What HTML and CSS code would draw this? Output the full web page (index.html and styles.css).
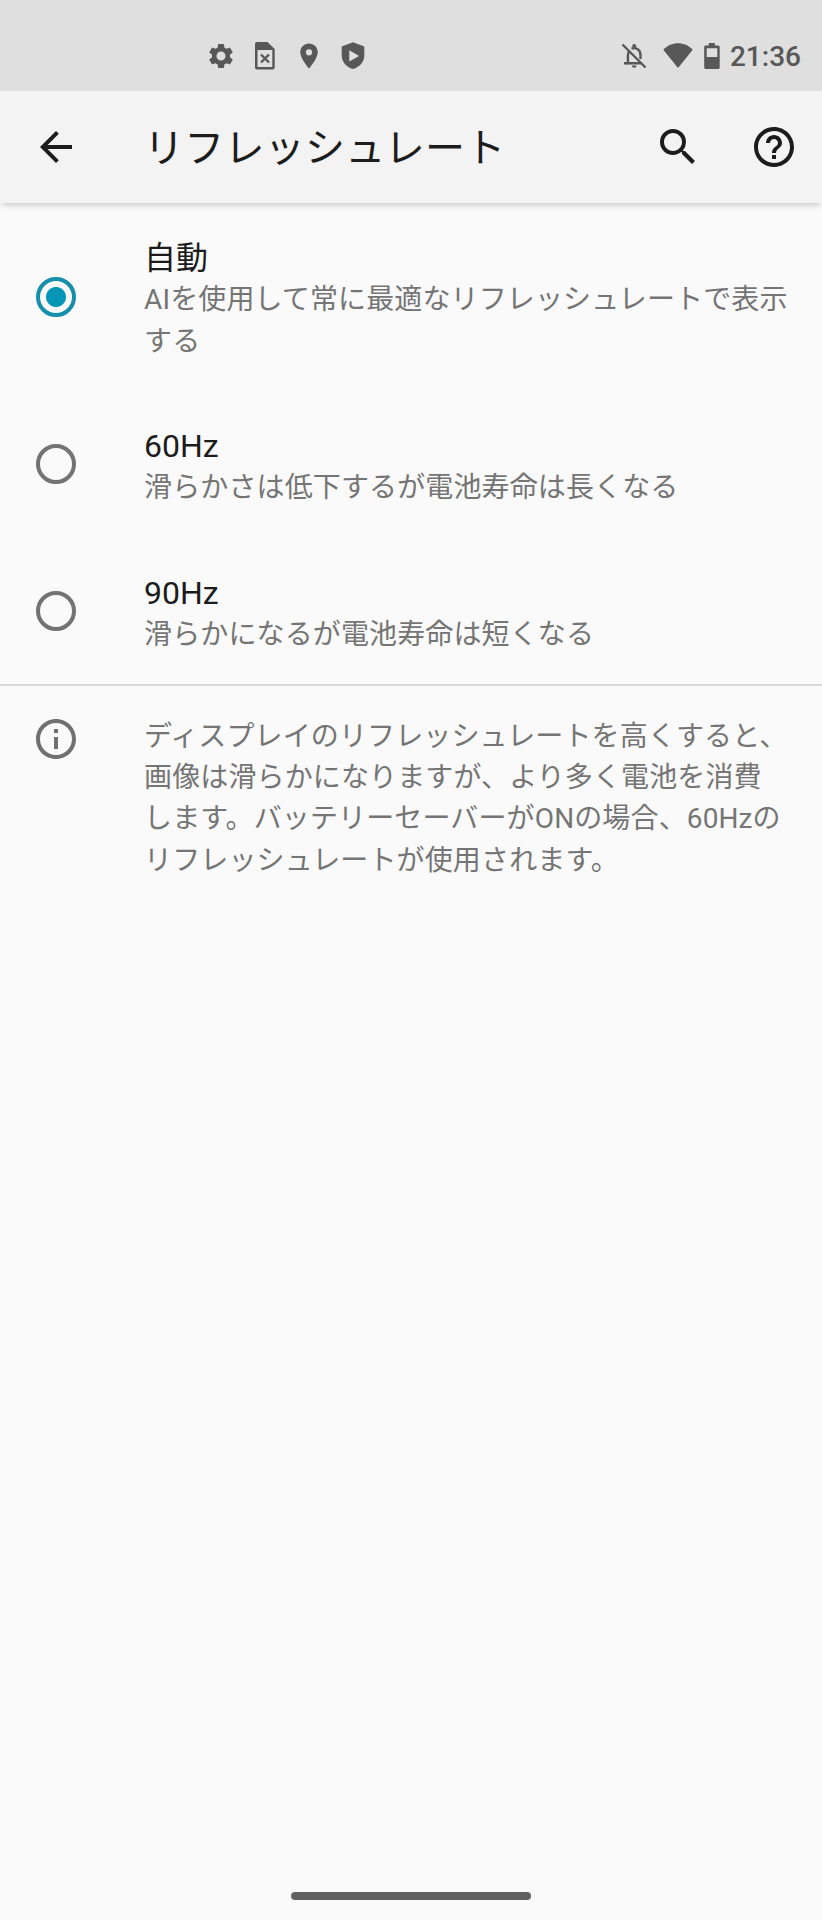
FILE: index.html
```html
<!DOCTYPE html>
<html lang="ja">
<head>
  <meta charset="UTF-8">
  <title>リフレッシュレート</title>
  <link rel="stylesheet" href="styles.css">
</head>
<body>
  <div class="status-bar">
    <div class="notifications">
      <svg viewBox="-0.8 -0.8 25.6 25.6"><path d="M19.14 12.94c.04-.3.06-.61.06-.94 0-.32-.02-.64-.07-.94l2.03-1.58c.18-.14.23-.41.12-.61l-1.92-3.32c-.12-.22-.37-.29-.59-.22l-2.39.96c-.5-.38-1.03-.7-1.62-.94L14.4 2.81c-.04-.24-.24-.41-.48-.41h-3.84c-.24 0-.43.17-.47.41l-.36 2.54c-.59.24-1.13.57-1.62.94l-2.39-.96c-.22-.08-.47 0-.59.22L2.74 8.87c-.12.21-.08.47.12.61l2.03 1.58c-.05.3-.09.63-.09.94s.02.64.07.94l-2.03 1.58c-.18.14-.23.41-.12.61l1.92 3.32c.12.22.37.29.59.22l2.39-.96c.5.38 1.03.7 1.62.94l.36 2.54c.05.24.24.41.48.41h3.84c.24 0 .44-.17.47-.41l.36-2.54c.59-.24 1.13-.56 1.62-.94l2.39.96c.22.08.47 0 .59-.22l1.92-3.32c.12-.22.07-.47-.12-.61l-2.01-1.58zM12 15.6c-1.98 0-3.6-1.62-3.6-3.6s1.62-3.6 3.6-3.6 3.6 1.62 3.6 3.6-1.62 3.6-3.6 3.6z"/></svg>
      <svg viewBox="0 0 32 32">
        <path fill-rule="evenodd" d="M8 2h10.500l7.200 7v18.500a2 2 0 0 1-2 2H8a2 2 0 0 1-2-2V4a2 2 0 0 1 2-2zM8.500 10v17h14.800V10z"/>
        <path class="line" d="M12 14.500l8 8M20 14.500l-8 8"/>
      </svg>
      <svg viewBox="-0.8 -0.8 25.6 25.6"><path d="M12 2C8.13 2 5 5.13 5 9c0 5.250 7 13 7 13s7-7.750 7-13c0-3.870-3.130-7-7-7zm0 9.500a2.500 2.500 0 0 1 0-5 2.500 2.500 0 0 1 0 5z"/></svg>
      <svg viewBox="0 0 32 32"><path fill-rule="evenodd" d="M16 2.200L27.300 6.500v9.300c0 6-4.700 11.300-11.300 13.300-6.600-2-11.300-7.300-11.300-13.300V6.500zM12.300 10.300v11.200l9.700-5.600z"/></svg>
    </div>
    <div class="system">
      <svg class="bell" viewBox="0 0 26 26">
        <path class="line" d="M1.500 1.500l23 23M5.500 20.300h14.300M6.900 20V12.500c0-2 .6-3.700 1.700-5M10.500 5.600c4.500-1.600 9 1.300 9 6.400v4"/>
        <path d="M11.300 4.500V2.800a1.900 1.900 0 0 1 3.800 0v1.700zM10.700 22.500h5a2.500 2.300 0 0 1-5 0zM3 19h4v2.600H3z"/>
      </svg>
      <svg class="wifi" viewBox="0 0 30 25"><path d="M15 25L.3 6.800C4.300 2.200 9.300.2 15 .2s10.700 2 14.700 6.600z"/></svg>
      <svg class="battery" viewBox="0 0 16 26"><path fill-rule="evenodd" d="M4.700 0h6.200v2.500h3.300c.9 0 1.500.6 1.500 1.500v20.500c0 .9-.6 1.500-1.500 1.500H1.700C.8 26 .2 25.400.2 24.500V4c0-.9.6-1.500 1.500-1.500h3zM2.700 5.200v8.700h10.600V5.200z"/></svg>
      <span class="clock">21:36</span>
    </div>
  </div>

  <div class="app-bar">
    <svg class="back" viewBox="0 0 24 24"><path d="M20 11H7.830l5.590-5.590L12 4l-8 8 8 8 1.410-1.410L7.830 13H20v-2z"/></svg>
    <h1>リフレッシュレート</h1>
    <svg class="search" viewBox="0 0 24 24"><path d="M15.500 14h-.79l-.28-.27A6.471 6.471 0 0 0 16 9.500 6.500 6.500 0 1 0 9.500 16c1.610 0 3.090-.59 4.230-1.570l.27.280v.79l5 4.990L20.490 19l-4.990-5zm-6 0C7.010 14 5 11.990 5 9.500S7.010 5 9.500 5 14 7.010 14 9.500 11.990 14 9.500 14z"/></svg>
    <svg viewBox="0 0 24 24"><path d="M11 18h2v-2h-2v2zm1-16C6.480 2 2 6.480 2 12s4.480 10 10 10 10-4.480 10-10S17.520 2 12 2zm0 18c-4.410 0-8-3.590-8-8s3.590-8 8-8 8 3.590 8 8-3.590 8-8 8zm0-14c-2.210 0-4 1.790-4 4h2c0-1.100.9-2 2-2s2 .9 2 2c0 2-3 1.750-3 5h2c0-2.250 3-2.500 3-5 0-2.210-1.790-4-4-4z"/></svg>
  </div>

  <div class="options">
    <div class="option">
      <span class="radio checked"></span>
      <div class="text">
        <h2>自動</h2>
        <p>AIを使用して常に最適なリフレッシュレートで表示<br>する</p>
      </div>
    </div>
    <div class="option">
      <span class="radio"></span>
      <div class="text">
        <h2>60Hz</h2>
        <p>滑らかさは低下するが電池寿命は長くなる</p>
      </div>
    </div>
    <div class="option">
      <span class="radio"></span>
      <div class="text">
        <h2>90Hz</h2>
        <p>滑らかになるが電池寿命は短くなる</p>
      </div>
    </div>
  </div>

  <div class="info">
    <svg viewBox="0 0 24 24"><path d="M11 7h2v2h-2zm0 4h2v6h-2zm1-9C6.480 2 2 6.480 2 12s4.480 10 10 10 10-4.480 10-10S17.520 2 12 2zm0 18c-4.410 0-8-3.590-8-8s3.590-8 8-8 8 3.590 8 8-3.590 8-8 8z"/></svg>
    <p>ディスプレイのリフレッシュレートを高くすると、<br>画像は滑らかになりますが、より多く電池を消費<br>します。バッテリーセーバーがONの場合、60Hzの<br>リフレッシュレートが使用されます。</p>
  </div>

  <div class="home-handle"></div>
</body>
</html>
```
FILE: styles.css
```css
* {
  box-sizing: border-box;
}
body {
  margin: 0;
  width: 822px;
  height: 1920px;
  display: flex;
  flex-direction: column;
  background: #fafafa;
  font-family: Roboto, "Noto Sans CJK JP", sans-serif;
  color: #1c1c1c;
}
h1, h2, p {
  margin: 0;
  font-weight: normal;
  white-space: nowrap;
}
svg {
  display: block;
  flex: none;
  fill: currentColor;
}
.line {
  fill: none;
  stroke: currentColor;
  stroke-width: 2.4;
}

/* status bar */
.status-bar {
  height: 91px;
  padding: 20px 21px 0 205px;
  display: flex;
  justify-content: space-between;
  align-items: center;
  background: #dfdfdf;
  color: #585858;
}
.notifications {
  display: flex;
  gap: 12px;
}
.notifications svg {
  width: 32px;
  height: 32px;
}
.system {
  display: flex;
  align-items: center;
}
.bell {
  width: 26px;
  height: 26px;
  margin-right: 16px;
}
.wifi {
  width: 30px;
  height: 25px;
  margin-right: 11px;
}
.battery {
  width: 16px;
  height: 26px;
  margin-right: 10px;
}
.clock {
  padding-top: 2px;
  font-size: 28px;
  font-weight: 500;
  line-height: 34px;
}

/* app bar */
.app-bar {
  height: 112px;
  padding: 0 24px 0 32px;
  display: flex;
  align-items: center;
  background: #f3f3f3;
  box-shadow: 0 4px 6px -2px rgba(0, 0, 0, 0.2);
}
.app-bar svg {
  width: 48px;
  height: 48px;
}
.app-bar h1 {
  flex: 1;
  margin-left: 64px;
  padding-top: 4px;
  font-size: 40px;
  line-height: 48px;
  letter-spacing: 0.25px;
}
.app-bar .search {
  margin-right: 48px;
}

/* radio list */
.options {
  border-bottom: 2px solid #d9d9d9;
}
.option {
  display: flex;
  align-items: center;
  padding-left: 36px;
}
.radio {
  width: 40px;
  height: 40px;
  margin-right: 68px;
  border: 4px solid #737373;
  border-radius: 50%;
}
.radio.checked {
  border-color: #168fab;
  background: radial-gradient(circle, #0896b8 9.5px, transparent 10.5px);
}
.option .text {
  padding: 35.4px 0 29px;
}
.option h2 {
  font-size: 32px;
  line-height: 41px;
}
.option p, .info p {
  font-size: 28px;
  line-height: 41.200px;
  letter-spacing: 0.13px;
  color: #757575;
}

/* footer note */
.info {
  display: flex;
  padding: 29px 0 0 32px;
  color: #707070;
}
.info p {
  padding-top: 1px;
}
.info svg {
  width: 48px;
  height: 48px;
  margin-right: 64px;
}

.home-handle {
  width: 240px;
  height: 8px;
  margin: auto auto 20px;
  border-radius: 4px;
  background: #616161;
}
```
